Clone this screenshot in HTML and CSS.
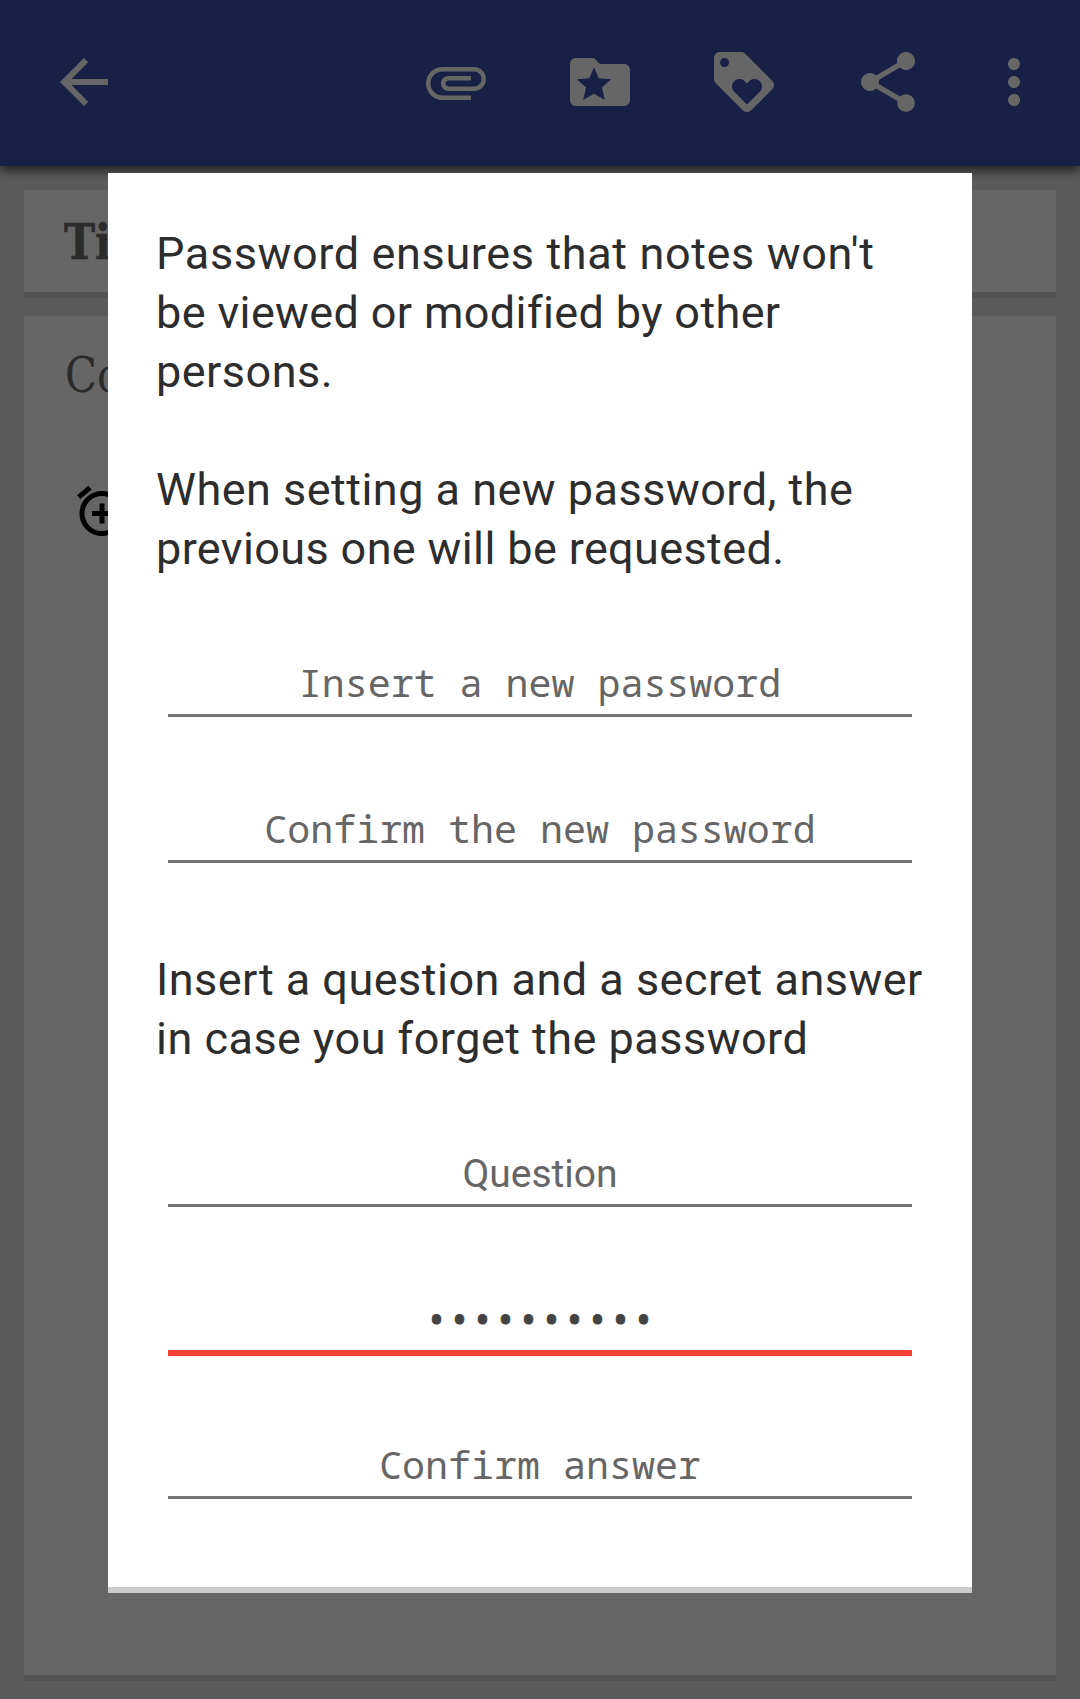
FILE: index.html
```html
<!DOCTYPE html>
<html lang="en">
<head>
<meta charset="utf-8">
<title>Note password</title>
<link rel="stylesheet" href="styles.css">
</head>
<body>
<div class="screen">
  <header class="toolbar">
    <svg class="icon" viewBox="0 0 24 24"><path d="M20 11H7.83l5.59-5.59L12 4l-8 8 8 8 1.41-1.41L7.83 13H20v-2z"/></svg>
    <div class="actions">
      <svg class="icon" viewBox="0 0 24 24"><path d="M7.5 18C4.46 18 2 15.54 2 12.5S4.46 7 7.5 7H18c2.21 0 4 1.79 4 4s-1.79 4-4 4H9.5C8.12 15 7 13.88 7 12.5S8.12 10 9.5 10H17v1.5H9.5c-.55 0-1 .45-1 1s.45 1 1 1H18c1.38 0 2.5-1.12 2.5-2.5S19.38 8.5 18 8.5H7.5c-2.21 0-4 1.79-4 4s1.79 4 4 4H17V18H7.5z"/></svg>
      <svg class="icon" viewBox="0 0 24 24"><path fill-rule="evenodd" d="M20 6h-8l-2-2H4c-1.1 0-2 .9-2 2v12c0 1.1.9 2 2 2h16c1.1 0 2-.9 2-2V8c0-1.1-.9-2-2-2zM10 7.1L11.6 10.75L15.7 11.1L12.66 13.85L13.6 18L10 15.9L6.4 18L7.34 13.85L4.3 11.1L8.4 10.75z"/></svg>
      <svg class="icon" viewBox="0 0 24 24"><path d="M21.41 11.58l-9-9C12.05 2.22 11.55 2 11 2H4c-1.1 0-2 .9-2 2v7c0 .55.22 1.05.59 1.42l9 9c.36.36.86.58 1.41.58.55 0 1.05-.22 1.41-.59l7-7c.37-.36.59-.86.59-1.41 0-.55-.23-1.06-.59-1.42zM5.5 7C4.67 7 4 6.33 4 5.5S4.67 4 5.5 4 7 4.67 7 5.5 6.33 7 5.5 7zm11.77 8.27L13 19.54l-4.27-4.27C8.28 14.81 8 14.19 8 13.5c0-1.38 1.12-2.5 2.5-2.5.69 0 1.32.28 1.77.74l.73.72.73-.73c.45-.45 1.08-.73 1.77-.73 1.38 0 2.5 1.12 2.5 2.5 0 .69-.28 1.32-.73 1.77z"/></svg>
      <svg class="icon" viewBox="0 0 24 24"><path d="M18 16.08c-.76 0-1.44.3-1.96.77L8.91 12.7c.05-.23.09-.46.09-.7s-.04-.47-.09-.7l7.05-4.11c.54.5 1.25.81 2.04.81 1.66 0 3-1.34 3-3s-1.34-3-3-3-3 1.34-3 3c0 .24.04.47.09.7L8.04 9.81C7.5 9.31 6.79 9 6 9c-1.66 0-3 1.34-3 3s1.34 3 3 3c.79 0 1.5-.31 2.04-.81l7.12 4.16c-.05.21-.08.43-.08.65 0 1.61 1.31 2.92 2.92 2.92s2.92-1.31 2.92-2.92-1.31-2.92-2.92-2.92z"/></svg>
      <svg class="icon more" viewBox="0 0 24 24"><path d="M12 8c1.1 0 2-.9 2-2s-.9-2-2-2-2 .9-2 2 .9 2 2 2zm0 2c-1.1 0-2 .9-2 2s.9 2 2 2 2-.9 2-2-.9-2-2-2zm0 6c-1.1 0-2 .9-2 2s.9 2 2 2 2-.9 2-2-.9-2-2-2z"/></svg>
    </div>
  </header>
  <main class="note">
    <section class="card title"><span class="slab">Ti</span></section>
    <section class="card content">
      <span class="slab">Co</span>
      <svg class="alarm" viewBox="0 0 24 24"><path d="M7.88 3.39L6.6 1.86 2 5.71l1.29 1.53 4.59-3.85zM22 5.72l-4.6-3.86-1.29 1.53 4.6 3.86L22 5.72zM12 4c-4.97 0-9 4.03-9 9s4.02 9 9 9c4.97 0 9-4.03 9-9s-4.03-9-9-9zm0 16c-3.87 0-7-3.13-7-7s3.13-7 7-7 7 3.13 7 7-3.13 7-7 7zm1-11h-2v3H8v2h3v3h2v-3h3v-2h-3V9z"/></svg>
    </section>
  </main>
  <div class="scrim">
    <div class="dialog">
      <div class="message">
        <p><span class="loose">Password ensures that notes won't</span><br><span class="tight">be viewed or modified by other</span><br>persons.</p>
        <p>When setting a new password, the<br><span class="tight">previous one will be requested.</span></p>
      </div>
      <div class="field first">Insert a new password</div>
      <div class="field">Confirm the new password</div>
      <p class="hint">Insert a question and a secret answer<br>in case you forget the password</p>
      <div class="field first plain">Question</div>
      <div class="field focused">••••••••••</div>
      <div class="field">Confirm answer</div>
    </div>
  </div>
</div>
</body>
</html>
```
FILE: styles.css
```css
* { box-sizing: border-box; }
body { margin: 0; }
p { margin: 0; }

.screen {
  position: relative;
  width: 1080px;
  height: 1699px;
  overflow: hidden;
  background: #e1e1e1;
  display: flex;
  flex-direction: column;
}

.toolbar {
  height: 166px;
  flex: none;
  padding: 0 30px 2px 48px;
  background: #3f50af;
  box-shadow: 0 5px 10px rgba(0, 0, 0, .6);
  display: flex;
  align-items: center;
  justify-content: space-between;
  z-index: 1;
}
.actions { display: flex; gap: 72px; }
.icon { display: block; width: 72px; height: 72px; fill: #fff; }
.more { margin-left: -18px; }

.note {
  flex: 1;
  display: flex;
  flex-direction: column;
  gap: 18px;
  padding: 24px 24px 18px;
}
.card {
  background: #fff;
  border-bottom: 6px solid #ccc;
  padding-left: 40px;
  color: #6c6c6c;
  font-family: "Roboto Slab", "DejaVu Serif", serif;
  font-size: 48px;
}
.slab { display: block; width: 60px; transform: scaleX(.87); transform-origin: left; }
.title { height: 108px; flex: none; font-weight: bold; line-height: 104px; }
.title .slab { -webkit-text-stroke: .6px #6c6c6c; }
.content { flex: 1; padding: 29px 0 0 41px; line-height: 60px; }
.alarm { display: block; width: 60px; height: 60px; margin: 76px 0 0 7px; }

.scrim {
  position: absolute;
  inset: 0;
  background: rgba(0, 0, 0, .6);
  z-index: 2;
  padding: 173px 108px 106px;
  display: flex;
}
.dialog {
  flex: 1;
  background: #fff;
  border-bottom: 6px solid #ccc;
  padding: 51px 48px 0;
  font-family: Roboto, sans-serif;
  color: #2d2d2d;
}
.message, .hint { font-size: 45px; line-height: 59px; letter-spacing: .48px; white-space: nowrap; }
.message { display: flex; flex-direction: column; gap: 59px; }
.loose { letter-spacing: .63px; }
.tight { letter-spacing: .37px; }
.hint { margin-top: 87px; }

.field {
  height: 146px;
  margin: 0 12px;
  padding-top: 86px;
  border-bottom: 3px solid #757575;
  color: #666;
  text-align: center;
  font: 38.3px/50px "Droid Sans Mono", "Noto Mono", "Noto Sans Mono", "DejaVu Sans Mono", monospace;
}
.first { height: 139px; padding-top: 79px; }
.plain { padding-top: 81px; font-family: Roboto, sans-serif; font-size: 39px; }
.focused {
  height: 149px;
  margin-bottom: -3px;
  border-bottom: 6px solid #f44336;
  color: #444;
  -webkit-text-stroke: 1px #444;
}
```
